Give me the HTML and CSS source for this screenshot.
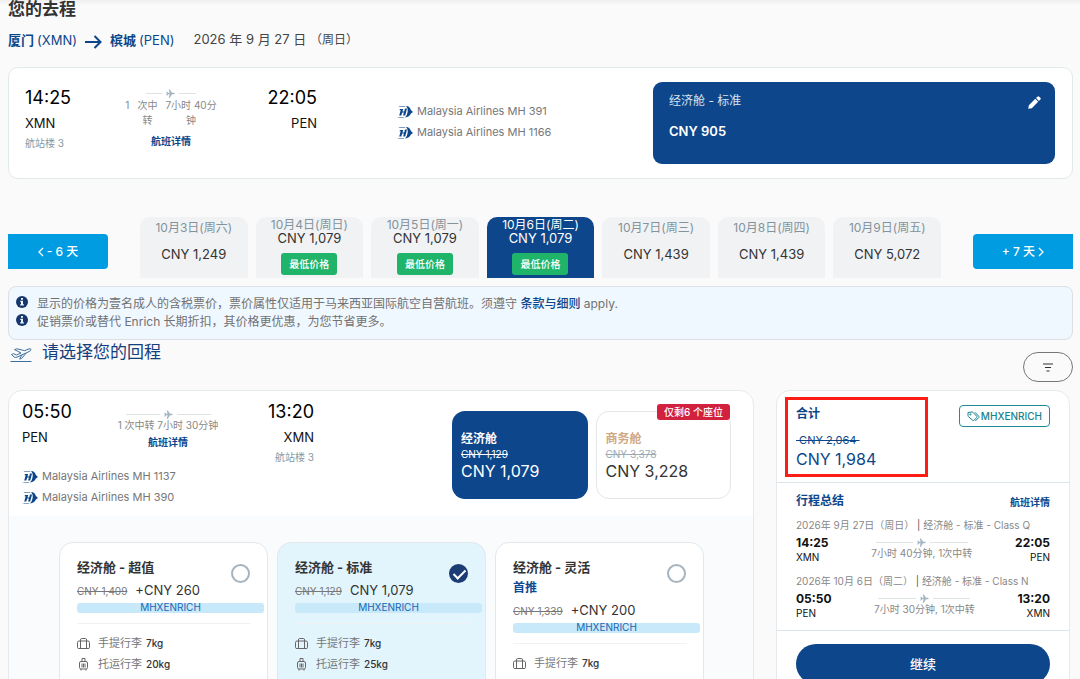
FILE: index.html
```html
<!DOCTYPE html>
<html lang="zh-CN">
<head>
<meta charset="utf-8">
<meta name="viewport" content="width=device-width, initial-scale=1">
<title>选择航班</title>
<link rel="stylesheet" href="styles.css">
</head>
<body>
<svg class="defs" aria-hidden="true">
  <symbol id="plane" viewBox="0 0 12 12"><path d="M11.6 6c0-.6-.6-1.100-1.300-1.100H8L5.100.5H3.600l1.300 4.400H2.900L1.700 3.500H.4L1.100 6 .4 8.500h1.300l1.200-1.400h2l-1.300 4.400h1.500L8 7.100h2.300c.7 0 1.300-.5 1.300-1.100z"/></symbol>
  <symbol id="airline" viewBox="0 0 16 14"><path d="M9 1c3 .1 4.300 1.800 4.900 4L16 7l-2.100 1.600c-.9 2.300-2.900 3.800-5.900 4 1.200-1.200 2-3 2.500-5.100C11.100 5 10.700 2.700 9 1z"/><path d="M1.500 1h6.300l.9.800H2.500z" opacity=".7"/><path d="M3.200 4h3L5.500 6.400h1.700L8 3.600h2L8.200 10.500H6.100l.8-2.900H5.200l-.9 3H2.200l1.500-5.400H2.300z"/><path d="M0 13l2.600-1.100h4.900L6.500 13z" opacity=".5"/></symbol>
  <symbol id="info" viewBox="0 0 12 12"><circle cx="6" cy="6" r="6"/><path fill="#eff7ff" d="M5 2h2v1.800H5zM4.300 4.800H7v3.500h.9v1.100H4.200V8.300H5V5.900h-.7z"/></symbol>
  <symbol id="cabin" viewBox="0 0 13 12"><path fill="none" stroke="currentColor" d="M2 3.500h9q1.500 0 1.500 1.500v5q0 1-1.500 1H2q-1.500 0-1.500-1V5q0-1.500 1.500-1.500zM3.500 11V2.500q0-1.500 1-1.500h4q1 0 1 1.500V11"/></symbol>
  <symbol id="checked" viewBox="0 0 12 13"><path fill="none" stroke="currentColor" d="M3.500 3.500h5q1.500 0 1.500 1.500v4.500q0 1.500-1.500 1.500h-5Q2 11 2 9.500V5q0-1.500 1.500-1.500zM4.500 3.500v-3h3v3M4.500 5.500v4M6 5.500v4M7.500 5.500v4M3.500 11v1.500M8.500 11v1.500"/></symbol>
</svg>
<div class="page">
  <header class="trip">
    <h1 class="heading">您的去程</h1>
    <div class="route">
      <strong>厦门 <span>(XMN)</span></strong>
      <svg class="route-arrow" viewBox="0 0 17 14"><path d="M0 7h15M9.500 1l6 6-6 6"/></svg>
      <strong>槟城 <span>(PEN)</span></strong>
      <time>2026 年 9 月 27 日 <span>（周日）</span></time>
    </div>
  </header>

  <section class="outbound">
    <div class="segment">
      <div class="stop"><b class="clock">14:25</b><span class="code">XMN</span><span class="terminal">航站楼 3</span></div>
      <div class="middle">
        <div class="flight-line short"><svg><use href="#plane"/></svg></div>
        <div class="wrapped"><span>1</span><span>次中<br>转</span><span>7小时 40分<br>钟</span></div>
        <a class="details" href="#details">航班详情</a>
      </div>
      <div class="stop end"><b class="clock">22:05</b><span class="code">PEN</span></div>
    </div>
    <ul class="airlines">
      <li><svg><use href="#airline"/></svg>Malaysia Airlines MH 391</li>
      <li><svg><use href="#airline"/></svg>Malaysia Airlines MH 1166</li>
    </ul>
    <div class="chosen">
      <div><span class="chosen-name">经济舱 - 标准</span><b class="chosen-price">CNY 905</b></div>
      <button class="edit" aria-label="编辑"><svg viewBox="0 0 12 12"><path d="M.2 11.800l.6-3.300 5.900-5.900 2.700 2.700-5.900 5.900zM7.400 1.900L8.700.6q.8-.8 1.600 0l1.100 1.100q.8.8 0 1.600l-1.300 1.300z"/></svg></button>
    </div>
  </section>

  <nav class="calendar">
    <button class="shift prev"><svg viewBox="0 0 6 10"><path d="M5 1L1 5l4 4"/></svg>- 6 天</button>
    <div class="days">
      <button class="day"><span class="date">10月3日(周六)</span><span class="amount">CNY 1,249</span></button>
      <button class="day low"><span class="date">10月4日(周日)</span><span class="amount">CNY 1,079</span><span class="lowest">最低价格</span></button>
      <button class="day low"><span class="date">10月5日(周一)</span><span class="amount">CNY 1,079</span><span class="lowest">最低价格</span></button>
      <button class="day low current"><span class="date">10月6日(周二)</span><span class="amount">CNY 1,079</span><span class="lowest">最低价格</span></button>
      <button class="day"><span class="date">10月7日(周三)</span><span class="amount">CNY 1,439</span></button>
      <button class="day"><span class="date">10月8日(周四)</span><span class="amount">CNY 1,439</span></button>
      <button class="day"><span class="date">10月9日(周五)</span><span class="amount">CNY 5,072</span></button>
    </div>
    <button class="shift next">+ 7 天<svg viewBox="0 0 6 10"><path d="M1 1l4 4-4 4"/></svg></button>
  </nav>

  <ul class="notice">
    <li><svg><use href="#info"/></svg><p>显示的价格为壹名成人的含税票价，票价属性仅适用于马来西亚国际航空自营航班。须遵守 <a href="#terms">条款与细则</a> apply.</p></li>
    <li><svg><use href="#info"/></svg><p>促销票价或替代 Enrich 长期折扣，其价格更优惠，为您节省更多。</p></li>
  </ul>

  <div class="return-head">
    <svg class="takeoff" viewBox="0 0 22 18"><path d="M1.500 9.500l2-.8 3 1.300 4.500-2L4.500 4.600l2.300-.8 8 1.900 3.200-1.500q2.600-1 3 .2.100 1.200-2 2.200L7 12.200q-2 .6-3-.3zM12 9.800l-2.400 4.300 2-.6 4.500-5.400"/><path d="M.5 16.500h21"/></svg>
    <h2 class="heading">请选择您的回程</h2>
    <button class="filter" aria-label="筛选"><svg viewBox="0 0 10 9"><path d="M0 1h10M2 4.500h6M3.500 8h3"/></svg></button>
  </div>

  <div class="columns">
    <main class="inbound">
      <div class="inbound-top">
        <div>
          <div class="segment">
            <div class="stop"><b class="clock">05:50</b><span class="code">PEN</span></div>
            <div class="middle low">
              <div class="flight-line"><svg><use href="#plane"/></svg></div>
              <span>1 次中转 7小时 30分钟</span>
              <a class="details" href="#details">航班详情</a>
            </div>
            <div class="stop end"><b class="clock">13:20</b><span class="code">XMN</span><span class="terminal">航站楼 3</span></div>
          </div>
          <ul class="airlines">
            <li><svg><use href="#airline"/></svg>Malaysia Airlines MH 1137</li>
            <li><svg><use href="#airline"/></svg>Malaysia Airlines MH 390</li>
          </ul>
        </div>
        <div class="cabins">
          <button class="cabin economy"><b>经济舱</b><s>CNY 1,129</s><span>CNY 1,079</span></button>
          <button class="cabin business"><b>商务舱</b><s>CNY 3,378</s><span>CNY 3,228</span><em>仅剩6 个座位</em></button>
        </div>
      </div>
      <div class="fares">
        <label class="fare">
          <input type="radio" name="fare">
          <b class="fare-name">经济舱 - 超值</b>
          <span class="fare-price"><s>CNY 1,409</s>+CNY 260</span>
          <span class="promo">MHXENRICH</span>
          <span class="perks">
            <span><svg><use href="#cabin"/></svg>手提行李 <b>7kg</b></span>
            <span><svg><use href="#checked"/></svg>托运行李 <b>20kg</b></span>
          </span>
        </label>
        <label class="fare picked">
          <input type="radio" name="fare" checked>
          <b class="fare-name">经济舱 - 标准</b>
          <span class="fare-price"><s>CNY 1,129</s>CNY 1,079</span>
          <span class="promo">MHXENRICH</span>
          <span class="perks">
            <span><svg><use href="#cabin"/></svg>手提行李 <b>7kg</b></span>
            <span><svg><use href="#checked"/></svg>托运行李 <b>25kg</b></span>
          </span>
        </label>
        <label class="fare">
          <input type="radio" name="fare">
          <b class="fare-name">经济舱 - 灵活</b>
          <b class="recommended">首推</b>
          <span class="fare-price"><s>CNY 1,339</s>+CNY 200</span>
          <span class="promo">MHXENRICH</span>
          <span class="perks">
            <span><svg><use href="#cabin"/></svg>手提行李 <b>7kg</b></span>
          </span>
        </label>
      </div>
    </main>

    <aside class="summary">
      <div class="total">
        <div><h3>合计</h3><s>&nbsp;CNY 2,064&nbsp;</s><b>CNY 1,984</b></div>
        <span class="coupon"><svg viewBox="0 0 13 11"><path d="M1 1.500l4-.5q.7 0 1.200.5l3.500 3.700q.6.7 0 1.300L7 9.300q-.7.600-1.300 0L1.500 5.700Q1 5.200 1 4.500zM8 1.300l3.800 4q.5.600 0 1.200L8.300 10"/><circle cx="3.400" cy="3.400" r=".6"/></svg>MHXENRICH</span>
        <i class="highlight"></i>
      </div>
      <div class="itinerary">
        <div class="itinerary-head"><h3>行程总结</h3><a class="details" href="#details">航班详情</a></div>
        <p class="leg-info">2026年 9月 27日（周日） <i>|</i> 经济舱 - 标准 - Class Q</p>
        <div class="leg">
          <div class="leg-stop"><b>14:25</b>XMN</div>
          <div class="leg-mid"><div class="flight-line"><svg><use href="#plane"/></svg></div>7小时 40分钟, 1次中转</div>
          <div class="leg-stop end"><b>22:05</b>PEN</div>
        </div>
        <p class="leg-info">2026年 10月 6日（周二） <i>|</i> 经济舱 - 标准 - Class N</p>
        <div class="leg">
          <div class="leg-stop"><b>05:50</b>PEN</div>
          <div class="leg-mid"><div class="flight-line"><svg><use href="#plane"/></svg></div>7小时 30分钟, 1次中转</div>
          <div class="leg-stop end"><b>13:20</b>XMN</div>
        </div>
      </div>
      <div class="action"><button class="continue">继续</button></div>
    </aside>
  </div>
</div>
</body>
</html>
```
FILE: styles.css
```css
* { box-sizing: border-box; }
body {
  margin: 0;
  background: #fafafa;
  color: #333;
  font: 12px/18px Inter, "Noto Sans CJK SC", sans-serif;
}
h1, h2, h3, p, ul { margin: 0; padding: 0; }
ul { list-style: none; }
a { text-decoration: none; color: #0c468a; }
button { font: inherit; color: inherit; border: 0; padding: 0; background: none; }
.defs { display: none; }
.page {
  height: 100vh;
  overflow: hidden;
  padding: 0 7px 0 8px;
  background: linear-gradient(#efefef, #fafafa 5px);
}

.trip { display: grid; gap: 11px; }
.heading { font-size: 17px; line-height: 18px; font-weight: 700; }
.route { display: flex; align-items: center; line-height: 20px; font-size: 13px; color: #0c468a; }
.route strong span { font-weight: 400; }
.route-arrow { width: 17px; height: 14px; margin: 4px 8px 0; fill: none; stroke: #0c468a; stroke-width: 2; }
.route time { margin-left: 19px; color: #444; }
.route time span { font-size: 12px; }

.outbound {
  display: grid;
  grid-template-columns: 292fr 336fr 402fr;
  margin-top: 17px;
  padding: 14px 17px 14px 16px;
  border: 1px solid #e2e9ea;
  border-radius: 10px;
  background: #fff;
}
.segment { display: grid; grid-template-columns: 1fr auto 1fr; }
.outbound .segment { padding-top: 4px; }
.stop { display: flex; flex-direction: column; color: #111; }
.end { text-align: right; }
.clock { font-size: 18px; line-height: 24px; font-weight: 400; color: #000; }
.code { font-size: 13px; line-height: 26px; }
.terminal { font-size: 10px; line-height: 14px; color: #8699a3; }
.middle { display: flex; flex-direction: column; align-items: center; padding-top: 3px; font-size: 10px; line-height: 13px; color: #888; }
.middle.low { padding-top: 10px; }
.flight-line { display: flex; align-items: center; gap: 4px; width: 85px; height: 9px; }
.flight-line.short { width: 50px; }
.flight-line::before, .flight-line::after { content: ""; flex: 1; height: 1px; background: #dde2e5; }
.flight-line svg { width: 9px; height: 9px; fill: #a3b5c0; }
.wrapped { display: flex; gap: 8px; line-height: 15px; text-align: center; margin-bottom: 3px; }
.details { font-size: 10px; line-height: 20px; font-weight: 700; }
.airlines { font-size: 11px; line-height: 21px; color: #777; }
.airlines li { display: flex; align-items: center; gap: 4px; }
.airlines svg { width: 16px; height: 14px; fill: #0c468a; }
.outbound .airlines { padding: 19px 0 0 80px; }
.chosen {
  display: flex;
  justify-content: space-between;
  align-items: flex-start;
  min-height: 82px;
  padding: 10px 14px 14px 16px;
  border-radius: 9px;
  background: #0d468b;
  color: #fff;
}
.chosen div { display: grid; gap: 10px; }
.chosen-name { color: #d8e3ef; }
.chosen-price { font-size: 13px; line-height: 22px; font-weight: 600; }
.edit svg { display: block; width: 13px; height: 13px; margin-top: 4px; fill: #fff; }

.calendar { display: flex; align-items: center; gap: 32px; margin-top: 38px; }
.shift {
  display: flex;
  align-items: center;
  justify-content: center;
  gap: 3px;
  width: 100px;
  height: 35px;
  margin-top: 8px;
  border-radius: 4px;
  background: #009ce1;
  color: #fff;
  font-weight: 500;
}
.prev { border-radius: 0 4px 4px 0; }
.next { border-radius: 4px 0 0 4px; }
.shift svg { width: 6px; height: 10px; fill: none; stroke: #fff; stroke-width: 1.3; }
.days { flex: 1; display: grid; grid-template-columns: repeat(7, 1fr); gap: 8px; }
.day {
  display: flex;
  flex-direction: column;
  align-items: center;
  height: 61px;
  padding-top: 1px;
  border-radius: 10px 10px 0 0;
  background: #f1f2f4;
}
.date { color: #82939d; line-height: 20px; }
.amount { margin-top: 7px; font-size: 13px; line-height: 18px; }
.low .date { line-height: 13px; }
.low .amount { margin: 0; line-height: 14px; }
.current { background: #0d468b; color: #fff; }
.current .date { color: #fff; }
.lowest { margin-top: 8px; padding: 0 8px; border-radius: 3px; background: #20b46b; color: #fff; font-size: 10px; line-height: 22px; font-weight: 500; }

.notice { margin-top: 8px; padding: 8px 7px; border: 1px solid #dcdfe3; border-radius: 8px; background: #eff7ff; color: #717171; }
.notice li { display: flex; gap: 9px; }
.notice svg { width: 12px; height: 12px; margin-top: 1px; fill: #17366c; flex: none; }
.notice a { font-weight: 500; }

.return-head { display: flex; align-items: flex-start; color: #153f7c; }
.return-head .heading { margin: 3px 0 0 10px; font-weight: 400; }
.takeoff { width: 22px; height: 18px; margin: 5px 0 0 2px; fill: none; stroke: #3f6f9e; }
.filter { display: grid; place-items: center; width: 50px; height: 30px; margin: 12px 0 8px auto; border: 1px solid #777; border-radius: 15px; }
.filter svg { width: 10px; height: 9px; stroke: #333; }

.columns { display: grid; grid-template-columns: 746fr 294fr; gap: 22px; padding-right: 3px; }
.inbound, .summary { border: 1px solid #e5eaec; border-radius: 14px 14px 0 0; background: #fff; overflow: hidden; }
.inbound-top { display: grid; grid-template-columns: 292fr 279fr; column-gap: 138px; padding: 9px 22px 8px 13px; }
.inbound .airlines { margin-top: 2px; }
.cabins { display: grid; grid-template-columns: 1fr 1fr; gap: 8px; height: 88px; margin-top: 11px; }
.cabin { position: relative; display: flex; flex-direction: column; justify-content: center; align-items: flex-start; padding: 0 9px; border-radius: 13px; text-align: left; }
.economy { background: #0d468b; color: #fff; }
.business { border: 1px solid #e2e8ea; }
.business b { color: #cfa884; }
.business s { color: #9aabb5; }
.cabin s { font-size: 10px; line-height: 13px; }
.cabin span { font-size: 16px; line-height: 20px; }
.cabin em { position: absolute; top: -8px; right: 0; padding: 0 7px; border-radius: 3px; background: #d2203f; color: #fff; font-size: 10px; line-height: 16px; font-style: normal; font-weight: 500; }

.fares { display: grid; grid-template-columns: repeat(3, 1fr); gap: 9px; padding: 26px 49px 0 50px; background: #fafbfd; }
.fare { position: relative; display: flex; flex-direction: column; min-height: 180px; padding: 13px 3px 0 17px; border: 1px solid #e2e8ec; border-radius: 14px; background: #fff; }
.fare.picked { background: #e2f5fd; }
.fare input { appearance: none; position: absolute; top: 21px; right: 17px; width: 19px; height: 19px; margin: 0; border: 2px solid #a5b4bf; border-radius: 50%; background: #fff; }
.fare input:checked { border-color: #1b3c74; background: #1b3c74; }
.fare input:checked::after { content: ""; position: absolute; left: 5px; top: 1px; width: 5px; height: 10px; border: solid #fff; border-width: 0 2px 2px 0; transform: rotate(45deg); }
.fare-name { font-size: 13px; line-height: 22px; }
.recommended { color: #0c4a94; line-height: 20px; }
.fare-price { font-size: 13px; line-height: 24px; }
.fare-price s { margin-right: 8px; font-size: 10px; color: #777; }
.promo { height: 10px; border-radius: 3px; background: #c7e9fa; color: #1867b4; font-size: 10px; line-height: 9px; text-align: center; }
.perks { display: grid; margin: 10px 13px 0 0; padding-top: 9px; border-top: 1px solid #f0f2f3; font-size: 11px; line-height: 21px; color: #777; }
.perks > span { display: flex; align-items: center; gap: 4px; }
.perks svg { width: 13px; height: 13px; margin-right: 4px; color: #666; }
.perks b { font-size: 10px; font-weight: 500; color: #333; }

.summary h3 { font-size: 12px; line-height: 18px; color: #0c468a; }
.total { position: relative; display: flex; justify-content: space-between; align-items: flex-start; padding: 14px 19px 13px; border-bottom: 1px solid #dce5e9; }
.total div { display: flex; flex-direction: column; align-items: flex-start; color: #0c468a; }
.total s { margin-top: 8px; font-size: 11px; line-height: 18px; }
.total b { font-size: 16px; line-height: 20px; font-weight: 400; }
.coupon { display: flex; align-items: center; height: 22px; padding: 0 7px; gap: 1px; border: 1px solid #238a94; border-radius: 4px; color: #17828d; font-size: 10px; font-weight: 500; }
.coupon svg { width: 13px; height: 11px; fill: none; stroke: #17828d; }
.highlight { position: absolute; left: 8px; top: 6px; width: 143px; height: 80px; border: 3px solid #fc1d14; }
.itinerary { padding: 9px 19px 10px; border-bottom: 1px solid #dce5e9; }
.itinerary-head { display: flex; justify-content: space-between; align-items: flex-start; margin-bottom: 4px; }
.leg-info { font-size: 10px; line-height: 18px; color: #888; white-space: nowrap; }
.leg-info i { color: #555; font-style: normal; }
.leg { display: flex; justify-content: space-between; }
.leg + .leg-info { margin-top: 8px; }
.leg-stop { font-size: 10px; line-height: 13px; color: #111; }
.leg-stop b { display: block; font-size: 12px; line-height: 17px; }
.leg-mid { display: flex; flex-direction: column; align-items: center; padding-top: 4px; font-size: 10px; line-height: 13px; color: #888; }
.leg-mid .flight-line { width: 92px; }
.action { padding: 13px 19px 20px; }
.continue { width: 100%; height: 40px; border-radius: 20px; background: #0d468b; color: #fff; font-size: 13px; font-weight: 500; }
```
